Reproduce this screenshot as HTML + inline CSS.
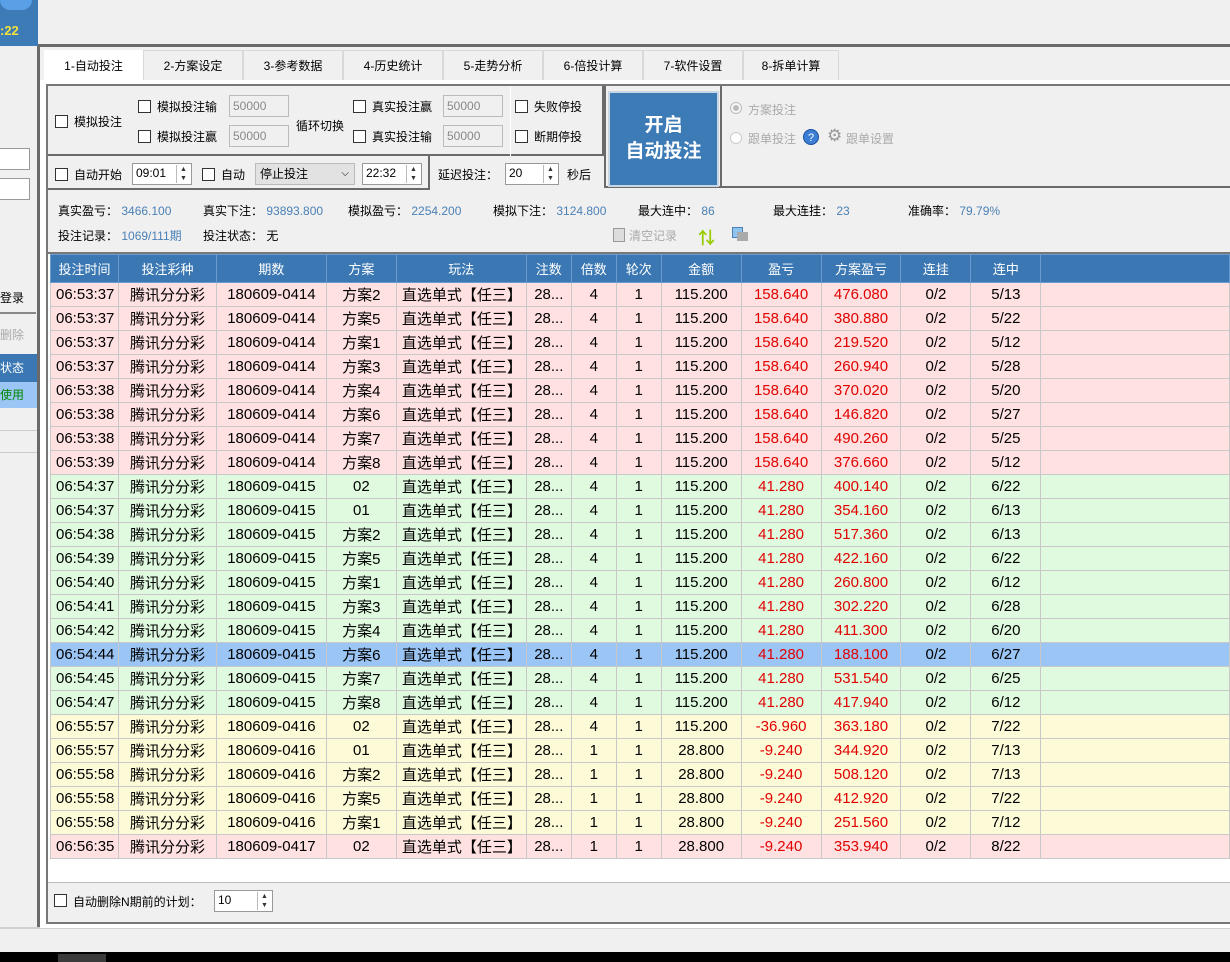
<!DOCTYPE html>
<html><head><meta charset="utf-8"><style>
*{box-sizing:border-box;margin:0;padding:0}
body{width:1230px;height:962px;background:#f0f0f0;font-family:"Liberation Sans","Noto Sans CJK SC",sans-serif;font-size:12px;color:#000;position:relative;overflow:hidden}
.a{position:absolute}
.cb{position:absolute;width:13px;height:13px;border:1px solid #333;background:#fff}
.inp{position:absolute;border:1px solid #bbb;background:#f0f0f0;color:#888;padding:2px 3px;height:22px;line-height:16px}
.spin{position:absolute;border:1px solid #999;background:#fff;height:22px;line-height:18px;padding-left:3px}
.spin i{position:absolute;right:1px;top:1px;width:14px;height:18px;border-left:1px solid #bbb;font-style:normal;font-size:7px;line-height:9px;text-align:center;color:#333}
.tab{position:absolute;top:50px;height:30px;width:100px;border:1px solid #d9d9d9;border-bottom:none;background:#f0f0f0;text-align:center;line-height:30px}
.blue{color:#4a80b5}
table{border-collapse:collapse;position:absolute;left:50px;top:254px;font-size:15px}
td,th{border:1px solid #c8c8c8;height:24px;text-align:center;white-space:nowrap;overflow:hidden;padding:0}
th{background:#3b78b3;color:#fff;font-weight:normal;font-size:13px;height:28px;border-color:#6a9bd0}
td.l{text-align:left;padding-left:5px}
tr.p td{background:#ffe1e1}tr.g td{background:#dffadf}tr.y td{background:#fdfad8}tr.s td{background:#9ac5f5}
.r{color:#e00000}
</style></head><body>
<!-- top left -->
<div class="a" style="left:0;top:0;width:38px;height:46px;background:#3d7bb6"></div>
<div class="a" style="left:0;top:0;width:32px;height:10px;border-radius:0 0 16px 16px;background:#5aa0e6"></div>
<div class="a" style="left:0;top:23px;color:#f4e23a;font-weight:bold;font-size:13px">:22</div>
<div class="a" style="left:38px;top:44px;width:1192px;height:3px;background:#6a6a6a"></div>
<div class="a" style="left:37px;top:46px;width:3px;height:882px;background:#6a6a6a"></div>
<div class="a" style="left:0;top:927px;width:1230px;height:2px;background:#d0d0d0"></div>
<div class="a" style="left:0;top:952px;width:1230px;height:10px;background:#000"></div>
<div class="a" style="left:58px;top:954px;width:48px;height:8px;background:#3a3a3a"></div>
<!-- left sidebar -->
<div class="a" style="left:0;top:148px;width:30px;height:22px;border:1px solid #999;border-left:none;background:#fff"></div>
<div class="a" style="left:0;top:178px;width:30px;height:22px;border:1px solid #999;border-left:none;background:#fff"></div>
<div class="a" style="left:0;top:284px;width:36px;height:30px;border-bottom:2px solid #888;line-height:28px">登录</div>
<div class="a" style="left:0;top:324px;color:#aaa;line-height:22px">删除</div>
<div class="a" style="left:0;top:354px;width:37px;height:28px;background:#3b78b3;color:#fff;line-height:28px">状态</div>
<div class="a" style="left:0;top:382px;width:37px;height:26px;background:#9ac5f5;color:#080;line-height:26px">使用</div>
<div class="a" style="left:0;top:430px;width:37px;height:1px;background:#ccc"></div>
<div class="a" style="left:0;top:452px;width:37px;height:1px;background:#ccc"></div>
<!-- tabs -->
<div class="tab" style="left:44px;width:99px;background:#fff;border-color:#fff;height:31px">1-自动投注</div>
<div class="tab" style="left:143px">2-方案设定</div>
<div class="tab" style="left:243px">3-参考数据</div>
<div class="tab" style="left:343px">4-历史统计</div>
<div class="tab" style="left:443px">5-走势分析</div>
<div class="tab" style="left:543px">6-倍投计算</div>
<div class="tab" style="left:643px">7-软件设置</div>
<div class="tab" style="left:743px;width:96px">8-拆单计算</div>
<div class="a" style="left:40px;top:80px;width:1190px;height:848px;background:#fff"></div>
<div class="a" style="left:46px;top:84px;width:1184px;height:840px;border:2px solid #777;border-right:none;background:#f0f0f0"></div>
<!-- controls -->
<div class="a" style="left:48px;top:86px;width:556px;height:70px;border:2px solid #6a6a6a;border-top:none;border-left:none"></div>
<div class="a" style="left:510px;top:86px;width:1px;height:70px;background:#fff"></div>
<div class="a" style="left:48px;top:156px;width:382px;height:34px;border-right:2px solid #6a6a6a;border-bottom:2px solid #6a6a6a"></div>
<div class="cb" style="left:55px;top:115px"></div><div class="a" style="left:74px;top:113px">模拟投注</div>
<div class="cb" style="left:138px;top:100px"></div><div class="a" style="left:157px;top:98px">模拟投注输</div>
<div class="inp" style="left:229px;top:95px;width:60px">50000</div>
<div class="cb" style="left:138px;top:130px"></div><div class="a" style="left:157px;top:128px">模拟投注赢</div>
<div class="inp" style="left:229px;top:125px;width:60px">50000</div>
<div class="a" style="left:296px;top:117px">循环切换</div>
<div class="cb" style="left:353px;top:100px"></div><div class="a" style="left:372px;top:98px">真实投注赢</div>
<div class="inp" style="left:443px;top:95px;width:60px">50000</div>
<div class="cb" style="left:353px;top:130px"></div><div class="a" style="left:372px;top:128px">真实投注输</div>
<div class="inp" style="left:443px;top:125px;width:60px">50000</div>
<div class="cb" style="left:515px;top:100px"></div><div class="a" style="left:534px;top:98px">失败停投</div>
<div class="cb" style="left:515px;top:130px"></div><div class="a" style="left:534px;top:128px">断期停投</div>
<div class="cb" style="left:55px;top:168px"></div><div class="a" style="left:74px;top:166px">自动开始</div>
<div class="spin" style="left:132px;top:163px;width:60px">09:01<i>▲<br>▼</i></div>
<div class="cb" style="left:202px;top:168px"></div><div class="a" style="left:221px;top:166px">自动</div>
<div class="a" style="left:255px;top:163px;width:100px;height:22px;border:1px solid #bbb;background:#e2e2e2;line-height:20px;padding-left:4px">停止投注<span style="position:absolute;right:5px;font-size:10px">⌵</span></div>
<div class="spin" style="left:362px;top:163px;width:60px">22:32<i>▲<br>▼</i></div>
<div class="a" style="left:438px;top:166px">延迟投注：</div>
<div class="spin" style="left:505px;top:163px;width:54px">20<i>▲<br>▼</i></div>
<div class="a" style="left:567px;top:166px">秒后</div>
<div class="a" style="left:604px;top:86px;width:626px;height:102px;border:2px solid #6a6a6a;border-top:none;border-right:none"></div>
<div class="a" style="left:720px;top:86px;width:2px;height:102px;background:#6a6a6a"></div>
<div class="a" style="left:608px;top:91px;width:111px;height:96px;background:#3d7bb6;border:2px solid #c8d6e4;color:#fff;font-weight:bold;font-size:19px;text-align:center;line-height:26px;padding-top:20px">开启<br>自动投注</div>
<div class="a" style="left:730px;top:102px;width:12px;height:12px;border-radius:50%;border:1px solid #bbb;background:#f8f8f8"><div style="margin:2px;width:6px;height:6px;border-radius:50%;background:#bbb"></div></div>
<div class="a" style="left:748px;top:101px;color:#aaa">方案投注</div>
<div class="a" style="left:730px;top:132px;width:12px;height:12px;border-radius:50%;border:1px solid #ccc;background:#fff"></div>
<div class="a" style="left:748px;top:130px;color:#aaa">跟单投注</div>
<div class="a" style="left:803px;top:129px;width:16px;height:16px;border-radius:50%;background:#3c7ed4;color:#fff;font-size:11px;text-align:center;line-height:16px;border:1px solid #1a4f9c">?</div>
<div class="a" style="left:827px;top:127px;color:#999;font-size:17px;line-height:18px">⚙</div>
<div class="a" style="left:846px;top:130px;color:#aaa">跟单设置</div>
<!-- stats -->
<div class="a" style="left:58px;top:202px">真实盈亏： <span class="blue">3466.100</span></div>
<div class="a" style="left:203px;top:202px">真实下注： <span class="blue">93893.800</span></div>
<div class="a" style="left:348px;top:202px">模拟盈亏： <span class="blue">2254.200</span></div>
<div class="a" style="left:493px;top:202px">模拟下注： <span class="blue">3124.800</span></div>
<div class="a" style="left:638px;top:202px">最大连中： <span class="blue">86</span></div>
<div class="a" style="left:773px;top:202px">最大连挂： <span class="blue">23</span></div>
<div class="a" style="left:908px;top:202px">准确率： <span class="blue">79.79%</span></div>
<div class="a" style="left:58px;top:227px">投注记录： <span class="blue">1069/111期</span></div>
<div class="a" style="left:203px;top:227px">投注状态： 无</div>
<div class="a" style="left:613px;top:228px;width:12px;height:14px;border:1px solid #999;background:#ddd"></div>
<div class="a" style="left:629px;top:227px;color:#aaa">清空记录</div>
<div class="a" style="left:698px;top:224px;color:#9c0;font-size:17px;font-weight:bold">⇅</div>
<div class="a" style="left:732px;top:227px;width:11px;height:11px;background:#8fc4f0;border:1px solid #4a80b5"></div>
<div class="a" style="left:737px;top:232px;width:11px;height:9px;background:#aaa"></div>
<!-- table area -->
<div class="a" style="left:48px;top:252px;width:1182px;height:630px;background:#fff;border-top:2px solid #777"></div>
<table>
<colgroup><col style="width:68px"><col style="width:98px"><col style="width:110px"><col style="width:70px"><col style="width:130px"><col style="width:45px"><col style="width:45px"><col style="width:45px"><col style="width:80px"><col style="width:80px"><col style="width:80px"><col style="width:70px"><col style="width:70px"><col style="width:189px"></colgroup>
<tr><th>投注时间</th><th>投注彩种</th><th>期数</th><th>方案</th><th>玩法</th><th>注数</th><th>倍数</th><th>轮次</th><th>金额</th><th>盈亏</th><th>方案盈亏</th><th>连挂</th><th>连中</th><th></th></tr>
<tr class="p"><td class="l">06:53:37</td><td>腾讯分分彩</td><td>180609-0414</td><td>方案2</td><td class="l">直选单式【任三】</td><td>28...</td><td>4</td><td>1</td><td>115.200</td><td class="r">158.640</td><td class="r">476.080</td><td>0/2</td><td>5/13</td><td></td></tr>
<tr class="p"><td class="l">06:53:37</td><td>腾讯分分彩</td><td>180609-0414</td><td>方案5</td><td class="l">直选单式【任三】</td><td>28...</td><td>4</td><td>1</td><td>115.200</td><td class="r">158.640</td><td class="r">380.880</td><td>0/2</td><td>5/22</td><td></td></tr>
<tr class="p"><td class="l">06:53:37</td><td>腾讯分分彩</td><td>180609-0414</td><td>方案1</td><td class="l">直选单式【任三】</td><td>28...</td><td>4</td><td>1</td><td>115.200</td><td class="r">158.640</td><td class="r">219.520</td><td>0/2</td><td>5/12</td><td></td></tr>
<tr class="p"><td class="l">06:53:37</td><td>腾讯分分彩</td><td>180609-0414</td><td>方案3</td><td class="l">直选单式【任三】</td><td>28...</td><td>4</td><td>1</td><td>115.200</td><td class="r">158.640</td><td class="r">260.940</td><td>0/2</td><td>5/28</td><td></td></tr>
<tr class="p"><td class="l">06:53:38</td><td>腾讯分分彩</td><td>180609-0414</td><td>方案4</td><td class="l">直选单式【任三】</td><td>28...</td><td>4</td><td>1</td><td>115.200</td><td class="r">158.640</td><td class="r">370.020</td><td>0/2</td><td>5/20</td><td></td></tr>
<tr class="p"><td class="l">06:53:38</td><td>腾讯分分彩</td><td>180609-0414</td><td>方案6</td><td class="l">直选单式【任三】</td><td>28...</td><td>4</td><td>1</td><td>115.200</td><td class="r">158.640</td><td class="r">146.820</td><td>0/2</td><td>5/27</td><td></td></tr>
<tr class="p"><td class="l">06:53:38</td><td>腾讯分分彩</td><td>180609-0414</td><td>方案7</td><td class="l">直选单式【任三】</td><td>28...</td><td>4</td><td>1</td><td>115.200</td><td class="r">158.640</td><td class="r">490.260</td><td>0/2</td><td>5/25</td><td></td></tr>
<tr class="p"><td class="l">06:53:39</td><td>腾讯分分彩</td><td>180609-0414</td><td>方案8</td><td class="l">直选单式【任三】</td><td>28...</td><td>4</td><td>1</td><td>115.200</td><td class="r">158.640</td><td class="r">376.660</td><td>0/2</td><td>5/12</td><td></td></tr>
<tr class="g"><td class="l">06:54:37</td><td>腾讯分分彩</td><td>180609-0415</td><td>02</td><td class="l">直选单式【任三】</td><td>28...</td><td>4</td><td>1</td><td>115.200</td><td class="r">41.280</td><td class="r">400.140</td><td>0/2</td><td>6/22</td><td></td></tr>
<tr class="g"><td class="l">06:54:37</td><td>腾讯分分彩</td><td>180609-0415</td><td>01</td><td class="l">直选单式【任三】</td><td>28...</td><td>4</td><td>1</td><td>115.200</td><td class="r">41.280</td><td class="r">354.160</td><td>0/2</td><td>6/13</td><td></td></tr>
<tr class="g"><td class="l">06:54:38</td><td>腾讯分分彩</td><td>180609-0415</td><td>方案2</td><td class="l">直选单式【任三】</td><td>28...</td><td>4</td><td>1</td><td>115.200</td><td class="r">41.280</td><td class="r">517.360</td><td>0/2</td><td>6/13</td><td></td></tr>
<tr class="g"><td class="l">06:54:39</td><td>腾讯分分彩</td><td>180609-0415</td><td>方案5</td><td class="l">直选单式【任三】</td><td>28...</td><td>4</td><td>1</td><td>115.200</td><td class="r">41.280</td><td class="r">422.160</td><td>0/2</td><td>6/22</td><td></td></tr>
<tr class="g"><td class="l">06:54:40</td><td>腾讯分分彩</td><td>180609-0415</td><td>方案1</td><td class="l">直选单式【任三】</td><td>28...</td><td>4</td><td>1</td><td>115.200</td><td class="r">41.280</td><td class="r">260.800</td><td>0/2</td><td>6/12</td><td></td></tr>
<tr class="g"><td class="l">06:54:41</td><td>腾讯分分彩</td><td>180609-0415</td><td>方案3</td><td class="l">直选单式【任三】</td><td>28...</td><td>4</td><td>1</td><td>115.200</td><td class="r">41.280</td><td class="r">302.220</td><td>0/2</td><td>6/28</td><td></td></tr>
<tr class="g"><td class="l">06:54:42</td><td>腾讯分分彩</td><td>180609-0415</td><td>方案4</td><td class="l">直选单式【任三】</td><td>28...</td><td>4</td><td>1</td><td>115.200</td><td class="r">41.280</td><td class="r">411.300</td><td>0/2</td><td>6/20</td><td></td></tr>
<tr class="s"><td class="l">06:54:44</td><td>腾讯分分彩</td><td>180609-0415</td><td>方案6</td><td class="l">直选单式【任三】</td><td>28...</td><td>4</td><td>1</td><td>115.200</td><td class="r">41.280</td><td class="r">188.100</td><td>0/2</td><td>6/27</td><td></td></tr>
<tr class="g"><td class="l">06:54:45</td><td>腾讯分分彩</td><td>180609-0415</td><td>方案7</td><td class="l">直选单式【任三】</td><td>28...</td><td>4</td><td>1</td><td>115.200</td><td class="r">41.280</td><td class="r">531.540</td><td>0/2</td><td>6/25</td><td></td></tr>
<tr class="g"><td class="l">06:54:47</td><td>腾讯分分彩</td><td>180609-0415</td><td>方案8</td><td class="l">直选单式【任三】</td><td>28...</td><td>4</td><td>1</td><td>115.200</td><td class="r">41.280</td><td class="r">417.940</td><td>0/2</td><td>6/12</td><td></td></tr>
<tr class="y"><td class="l">06:55:57</td><td>腾讯分分彩</td><td>180609-0416</td><td>02</td><td class="l">直选单式【任三】</td><td>28...</td><td>4</td><td>1</td><td>115.200</td><td class="r">-36.960</td><td class="r">363.180</td><td>0/2</td><td>7/22</td><td></td></tr>
<tr class="y"><td class="l">06:55:57</td><td>腾讯分分彩</td><td>180609-0416</td><td>01</td><td class="l">直选单式【任三】</td><td>28...</td><td>1</td><td>1</td><td>28.800</td><td class="r">-9.240</td><td class="r">344.920</td><td>0/2</td><td>7/13</td><td></td></tr>
<tr class="y"><td class="l">06:55:58</td><td>腾讯分分彩</td><td>180609-0416</td><td>方案2</td><td class="l">直选单式【任三】</td><td>28...</td><td>1</td><td>1</td><td>28.800</td><td class="r">-9.240</td><td class="r">508.120</td><td>0/2</td><td>7/13</td><td></td></tr>
<tr class="y"><td class="l">06:55:58</td><td>腾讯分分彩</td><td>180609-0416</td><td>方案5</td><td class="l">直选单式【任三】</td><td>28...</td><td>1</td><td>1</td><td>28.800</td><td class="r">-9.240</td><td class="r">412.920</td><td>0/2</td><td>7/22</td><td></td></tr>
<tr class="y"><td class="l">06:55:58</td><td>腾讯分分彩</td><td>180609-0416</td><td>方案1</td><td class="l">直选单式【任三】</td><td>28...</td><td>1</td><td>1</td><td>28.800</td><td class="r">-9.240</td><td class="r">251.560</td><td>0/2</td><td>7/12</td><td></td></tr>
<tr class="p"><td class="l">06:56:35</td><td>腾讯分分彩</td><td>180609-0417</td><td>02</td><td class="l">直选单式【任三】</td><td>28...</td><td>1</td><td>1</td><td>28.800</td><td class="r">-9.240</td><td class="r">353.940</td><td>0/2</td><td>8/22</td><td></td></tr>
</table>
<div class="a" style="left:48px;top:882px;width:1182px;height:1px;background:#bbb"></div>
<div class="cb" style="left:54px;top:894px"></div>
<div class="a" style="left:73px;top:893px">自动删除N期前的计划：</div>
<div class="spin" style="left:214px;top:890px;width:59px">10<i>▲<br>▼</i></div>
</body></html>
